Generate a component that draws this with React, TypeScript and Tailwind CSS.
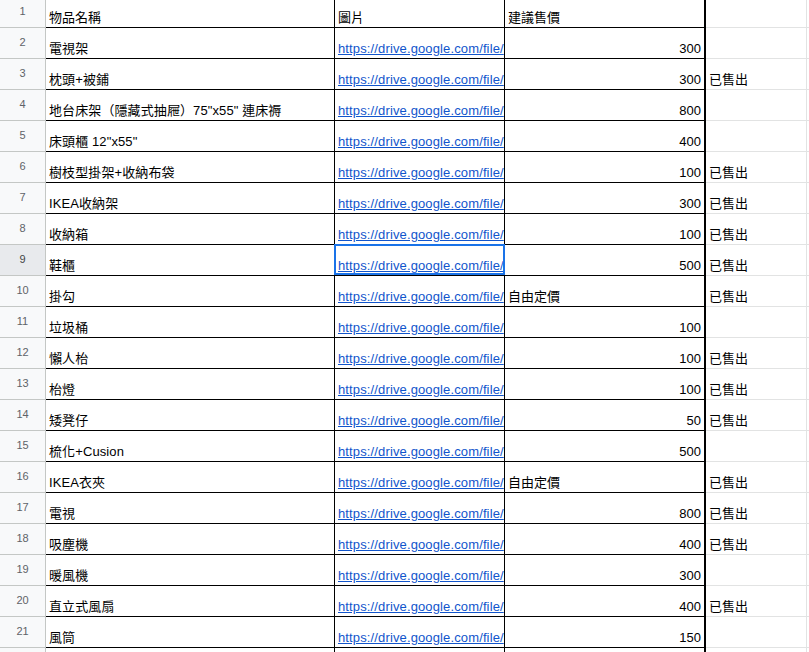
import React from 'react';

type Row = { name: string; price: string; free?: boolean; sold?: boolean };

const rows: Row[] = [
  { name: '電視架', price: '300' },
  { name: '枕頭+被鋪', price: '300', sold: true },
  { name: '地台床架（隱藏式抽屜）75"x55" 連床褥', price: '800' },
  { name: '床頭櫃 12"x55"', price: '400' },
  { name: '樹枝型掛架+收納布袋', price: '100', sold: true },
  { name: 'IKEA收納架', price: '300', sold: true },
  { name: '收納箱', price: '100', sold: true },
  { name: '鞋櫃', price: '500', sold: true },
  { name: '掛勾', price: '自由定價', free: true, sold: true },
  { name: '垃圾桶', price: '100' },
  { name: '懶人枱', price: '100', sold: true },
  { name: '枱燈', price: '100', sold: true },
  { name: '矮凳仔', price: '50', sold: true },
  { name: '梳化+Cusion', price: '500' },
  { name: 'IKEA衣夾', price: '自由定價', free: true, sold: true },
  { name: '電視', price: '800', sold: true },
  { name: '吸塵機', price: '400', sold: true },
  { name: '暖風機', price: '300' },
  { name: '直立式風扇', price: '400', sold: true },
  { name: '風筒', price: '150' },
  { name: '', price: '' },
];

// cell only shows the start of the drive url
const LINK = 'https://drive.google.com/file/';

const RowNum = ({ n, active }: { n: number; active?: boolean }) => (
  <div
    className={
      active
        ? 'w-[46px] shrink-0 flex items-end justify-center pb-[9px] bg-[#e8eaed] border-r border-b border-[#c4c7c5] text-[11px] leading-[14px] text-[#444746]'
        : 'w-[46px] shrink-0 flex items-end justify-center pb-[9px] bg-[#f8f9fa] border-r border-b border-[#c4c7c5] text-[11px] leading-[14px] text-[#5f6368]'
    }
  >
    {n}
  </div>
);

export default function App() {
  return (
    <div
      className="w-[809px] h-[652px] overflow-hidden bg-white text-[13px] leading-[17px] text-black"
      style={{ fontFamily: '"Liberation Sans", Arial, "Noto Sans CJK TC", sans-serif' }}
    >
      {/* header row */}
      <div className="flex h-[28px]">
        <RowNum n={1} />
        <div className="w-[289px] shrink-0 flex items-end px-[3px] pb-[1px] border-r border-b border-black">物品名稱</div>
        <div className="w-[170px] shrink-0 flex items-end px-[3px] pb-[1px] border-r border-b border-black">圖片</div>
        <div className="w-[201px] shrink-0 flex items-end px-[3px] pb-[1px] border-r-2 border-b border-black">建議售價</div>
        <div className="w-[101px] shrink-0 border-r border-b border-[#e2e3e3]" />
        <div className="flex-1 border-b border-[#e2e3e3]" />
      </div>

      {rows.map((r, i) => {
        const n = i + 2;
        const selected = n === 9;
        return (
          <div key={n} className="flex h-[31px]">
            <RowNum n={n} active={selected} />
            <div className="w-[289px] shrink-0 flex items-end px-[3px] pb-[1px] border-r border-b border-black whitespace-nowrap overflow-hidden tracking-[0.1px]">
              {r.name}
            </div>
            <div className="relative w-[170px] shrink-0 flex items-end pl-[3px] pb-[1px] border-r border-b border-black whitespace-nowrap">
              {r.name && (
                <a
                  href="https://drive.google.com/file/d/view?usp=sharing"
                  className="text-[#1155cc] underline tracking-[0.13px]"
                >
                  {LINK}
                </a>
              )}
              {selected && <div className="absolute -left-px -top-px -right-px bottom-0 border-2 border-[#1a73e8]" />}
            </div>
            <div
              className={
                r.free
                  ? 'w-[201px] shrink-0 flex items-end justify-start px-[3px] pb-[1px] border-r-2 border-b border-black'
                  : 'w-[201px] shrink-0 flex items-end justify-end px-[3px] pb-[1px] border-r-2 border-b border-black'
              }
            >
              {r.price}
            </div>
            <div className="w-[101px] shrink-0 flex items-end px-[3px] pb-[1px] border-r border-b border-[#e2e3e3]">
              {r.sold ? '已售出' : ''}
            </div>
            <div className="flex-1 border-b border-[#e2e3e3]" />
          </div>
        );
      })}
    </div>
  );
}
